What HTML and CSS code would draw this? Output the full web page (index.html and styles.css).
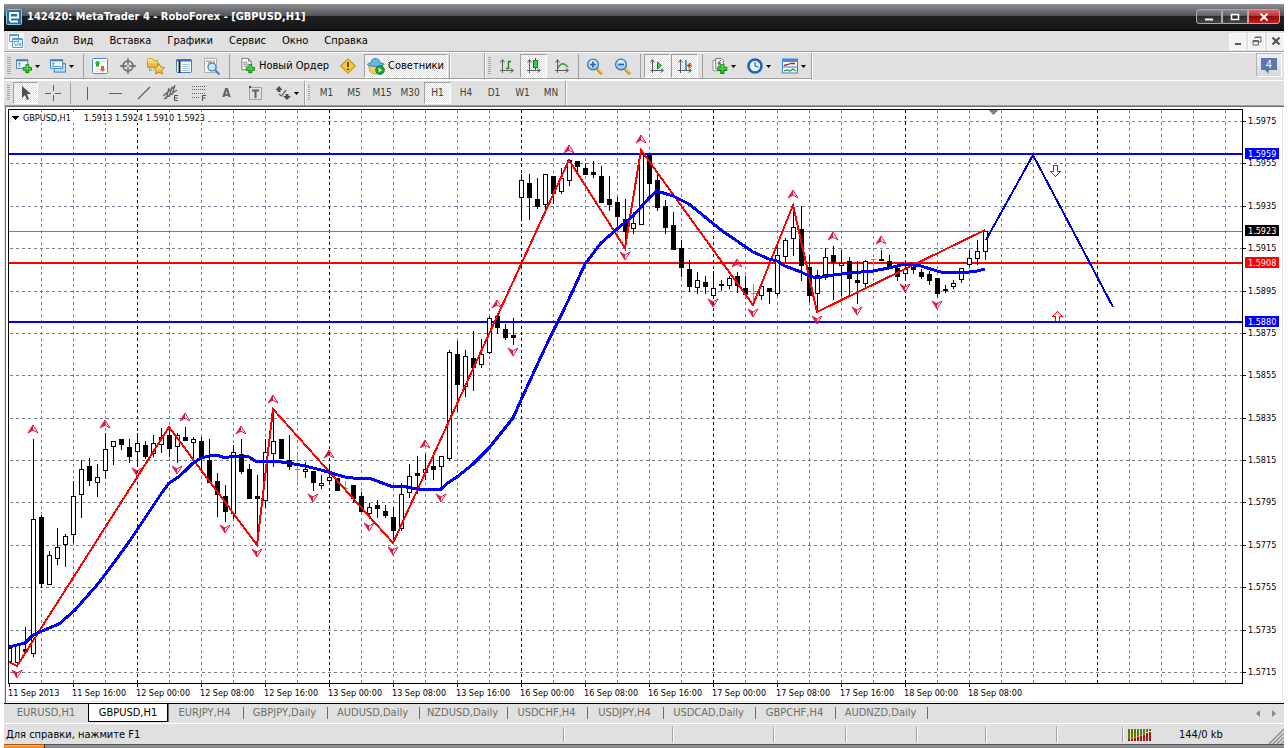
FILE: index.html
```html
<!DOCTYPE html>
<html lang="ru">
<head>
<meta charset="utf-8">
<title>142420: MetaTrader 4 - RoboForex - [GBPUSD,H1]</title>
<link rel="stylesheet" href="styles.css">
</head>
<body>
<svg class="defs" aria-hidden="true">
  <defs>
    <linearGradient id="gold" x1="0" y1="0" x2="0" y2="1"><stop offset="0" stop-color="#fff3a0"/><stop offset="1" stop-color="#e0a820"/></linearGradient>
    <linearGradient id="green" x1="0" y1="0" x2="0" y2="1"><stop offset="0" stop-color="#7cf27c"/><stop offset="1" stop-color="#10b010"/></linearGradient>
    <linearGradient id="sky" x1="0" y1="0" x2="0" y2="1"><stop offset="0" stop-color="#e8f5ff"/><stop offset="1" stop-color="#8cc4ee"/></linearGradient>
    <symbol id="plus" viewBox="0 0 10 10"><path d="M3.500 .5h3v3h3v3h-3v3h-3v-3h-3v-3h3z" fill="url(#green)" stroke="#078a07"/></symbol>
    <symbol id="axes" viewBox="0 0 16 16"><path d="M3.500 15V2M1 12.500h13M1.500 4.500l2-3 2 3M11.500 10.500l3 2-3 2" fill="none" stroke="#5c5c5c"/></symbol>
    <symbol id="caret" viewBox="0 0 5 3"><path d="M0 0h5L2.500 3z" fill="#000"/></symbol>
    <symbol id="cursor-cross" viewBox="0 0 16 16"><path d="M8.500 0v6M8.500 10v6M0 8.500h6M10 8.500h6" stroke="#606060" fill="none"/></symbol>
  </defs>
</svg>

<main class="window">
  <header class="titlebar">
    <svg class="logo" viewBox="0 0 16 16"><rect x=".5" y=".5" width="15" height="15" rx="1" fill="#2b6f9c" stroke="#8dc4e4"/><path d="M4 12V4h8v4.500H4M4 12.500h8" fill="none" stroke="#fff" stroke-width="1.800"/></svg>
    <h1 class="title">142420: MetaTrader 4 - RoboForex - [GBPUSD,H1]</h1>
    <div class="win-buttons">
      <button class="win-btn" aria-label="Свернуть"><svg viewBox="0 0 10 10"><path d="M1 7.500h8" stroke="#fff" stroke-width="2"/></svg></button>
      <button class="win-btn" aria-label="Развернуть"><svg viewBox="0 0 10 10"><path d="M1.500 2.500h7v5h-7z" fill="none" stroke="#fff" stroke-width="1.600"/></svg></button>
      <button class="win-btn close" aria-label="Закрыть"><svg viewBox="0 0 10 10"><path d="M1.500 1.500l7 7M8.500 1.500l-7 7" stroke="#fff" stroke-width="2"/></svg></button>
    </div>
  </header>

  <nav class="menubar">
    <svg class="menu-icon" viewBox="0 0 16 16"><rect width="16" height="16" fill="#fafafa"/><path d="M1.500 1.500h9v7h-9zM4.500 5.500h10v9h-10z" fill="#eef6ff" stroke="#5a9ade"/><path d="M1.500 2.500h9M4.500 6.500h10" stroke="#5a9ade"/><path d="M6 10l2 3 2-3 2 3 1-3" fill="none" stroke="#5a9ade"/></svg>
    <button class="menu-item">Файл</button><button class="menu-item">Вид</button><button class="menu-item">Вставка</button><button class="menu-item">Графики</button><button class="menu-item">Сервис</button><button class="menu-item">Окно</button><button class="menu-item">Справка</button>
    <div class="mdi-buttons">
      <button class="mdi-btn" aria-label="Свернуть окно"><svg viewBox="0 0 10 10"><path d="M2 8h6" stroke="#555" stroke-width="2"/></svg></button>
      <button class="mdi-btn" aria-label="Восстановить окно"><svg viewBox="0 0 10 10"><path d="M1 4.500h5.500v4.500H1zM1 5.500h5.500M3 2.500V1h6v5H7M3 1.500h6" fill="none" stroke="#666"/></svg></button>
      <button class="mdi-btn" aria-label="Закрыть окно"><svg viewBox="0 0 10 10"><path d="M1.500 1.500l7 7M8.500 1.500l-7 7" stroke="#555" stroke-width="2.200"/></svg></button>
    </div>
  </nav>

  <div class="toolrow">
    <div class="toolbar standard">
      <span class="grip"></span>
      <button class="tool drop" aria-label="Новый график"><svg class="ico" viewBox="0 0 17 16"><path d="M.5 1.500h12v9H.5z" fill="#eef6ff" stroke="#3c7fb8"/><path d="M.5 2h12" stroke="#3c7fb8" stroke-width="2"/><path d="M3.500 4v5M2 5.500h3" stroke="#5599cc"/><use href="#plus" x="7" y="6" width="10" height="10"/></svg><svg class="caret"><use href="#caret"/></svg></button>
      <button class="tool drop" aria-label="Профили"><svg class="ico" viewBox="0 0 17 16"><path d="M4.500 5.500h12v9h-12z" fill="#bcdcf4" stroke="#3c7fb8"/><path d="M.5 1.500h13v9H.5z" fill="#eef6ff" stroke="#3c7fb8"/><path d="M.5 2h13" stroke="#3c7fb8" stroke-width="2"/><path d="M3.500 4v5M2 8.500h10M2 5.500h3" stroke="#5599cc"/></svg><svg class="caret"><use href="#caret"/></svg></button>
      <i class="sep"></i>
      <button class="tool" aria-label="Обзор рынка"><svg class="ico" viewBox="0 0 16 16"><rect x=".5" y=".5" width="15" height="15" rx="1" fill="#fff" stroke="#4a90d0"/><path d="M8 3.500h5M3 11.500h4M3 13.500h4" stroke="#ddd"/><path d="M5.500 2.500l3 3H7v3H4v-3H2.500z" fill="#19b519"/><path d="M10.500 14l-3-3H9V8h3v3h1.500z" fill="#f4553a"/></svg></button>
      <button class="tool" aria-label="Окно данных"><svg class="ico" viewBox="0 0 16 16"><circle cx="8" cy="8" r="5" fill="none" stroke="#666" stroke-width="1.500"/><path d="M8 0v7M8 9v7M0 8h7M9 8h7" stroke="#666" stroke-width="1.300"/></svg></button>
      <button class="tool" aria-label="Навигатор"><svg class="ico wide" viewBox="0 0 18 17"><path d="M.5 3.500v-2l1-1h4l1 2h4v7h-10z" fill="url(#gold)" stroke="#c89a28"/><path d="M2 12h5M3 10v4" stroke="#777" stroke-dasharray="1 1"/><path d="M12 5.500l1.700 3.400 3.800.6-2.700 2.700.6 3.800-3.400-1.800L8.600 16l.6-3.800-2.700-2.700 3.800-.6z" fill="url(#gold)" stroke="#c08a18"/></svg></button>
      <button class="tool" aria-label="Терминал"><svg class="ico" viewBox="0 0 16 16"><rect x=".5" y="1.500" width="15" height="13" rx="1" fill="#fff" stroke="#3c7fc0"/><path d="M.5 2.500h15" stroke="#2f6fb8" stroke-width="2"/><path d="M3.500 3v12" stroke="#222" stroke-width="2"/><path d="M6 6.500h8M6 8.500h8M6 10.500h8M6 12.500h8" stroke="#aac8ec"/></svg></button>
      <button class="tool" aria-label="Тестер стратегий"><svg class="ico wide" viewBox="0 0 18 17"><path d="M1.500 .5h12v14h-12z" fill="#f6f6f6" stroke="#b0b0b0"/><path d="M3 3h3v5M8 2v5M11 2v4" stroke="#888" fill="none"/><path d="M12 12l4.500 4.500" stroke="#3c7fc0" stroke-width="2"/><circle cx="9" cy="9" r="4" fill="#c4e2f8" fill-opacity=".85" stroke="#4a90c8" stroke-width="1.400"/></svg></button>
      <i class="sep"></i>
      <button class="tool label new-order"><svg class="ico" viewBox="0 0 16 17"><path d="M1.500 .5h7l3 3v9h-10z" fill="#fff" stroke="#777"/><path d="M8.500 .5v3h3M3 4.500h4M3 6.500h6M3 8.500h5" fill="none" stroke="#777"/><use href="#plus" x="5" y="6.500" width="11" height="10"/></svg>Новый Ордер</button>
      <button class="tool" aria-label="Редактор"><svg class="ico" viewBox="0 0 16 16"><path d="M8 .8L15.200 8 8 15.200.8 8z" fill="#f8cc40" stroke="#c0941c" stroke-width="1.200" stroke-linejoin="round"/><path d="M8 4v5M8 10.500v1.700" stroke="#4a3a10" stroke-width="1.700"/></svg></button>
      <button class="tool label pressed experts"><svg class="ico wide" viewBox="0 0 18 17"><path d="M2 7c0 6 2 9 7 9s6-4 6-9z" fill="#f4d050" stroke="#c8a020"/><path d="M4 5c0-3 2-4.500 4-4.500S13 1.500 13 5c3 0 4 .5 4 1.500S12 8.500 8.500 8.500.5 7.500.5 6.500 2 5 4 5z" fill="#68b4e4" stroke="#3c86b8"/><circle cx="13" cy="12" r="4.300" fill="#18a830" stroke="#0c8420"/><path d="M11.700 9.800v4.400l3.500-2.200z" fill="#fff"/></svg>Советники</button>
      <span class="spacer"></span>
    </div>
    <div class="toolbar charts">
      <span class="grip"></span>
      <button class="tool" aria-label="Бары"><svg class="ico" viewBox="0 0 16 16"><use href="#axes"/><path d="M7 10.500h2.500M9.500 3V11M9.500 3.500h2.500" stroke="#128a12" fill="none" stroke-width="1.400"/></svg></button>
      <button class="tool pressed" aria-label="Свечи"><svg class="ico" viewBox="0 0 16 16"><use href="#axes"/><path d="M9.500 0v12" stroke="#128a12"/><rect x="7.500" y="2.500" width="4" height="7" fill="#30d040" stroke="#128a12"/></svg></button>
      <button class="tool" aria-label="Линия"><svg class="ico" viewBox="0 0 16 16"><use href="#axes"/><path d="M4 10c3-6 6-5 10-1" stroke="#2c9a3c" fill="none" stroke-width="1.300"/></svg></button>
      <i class="sep"></i>
      <button class="tool" aria-label="Увеличить"><svg class="ico wide" viewBox="0 0 18 17"><path d="M11 11l5 5" stroke="#c89820" stroke-width="3"/><path d="M11 10l5 5" stroke="#f8dc60"/><circle cx="7" cy="6.500" r="5.400" fill="url(#sky)" stroke="#3478b8" stroke-width="1.300"/><path d="M7 3.500v6M4 6.500h6" stroke="#2868a8" stroke-width="1.700"/></svg></button>
      <button class="tool" aria-label="Уменьшить"><svg class="ico wide" viewBox="0 0 18 17"><path d="M11 11l5 5" stroke="#c89820" stroke-width="3"/><path d="M11 10l5 5" stroke="#f8dc60"/><circle cx="7" cy="6.500" r="5.400" fill="url(#sky)" stroke="#3478b8" stroke-width="1.300"/><path d="M4 6.500h6" stroke="#2868a8" stroke-width="1.700"/></svg></button>
      <i class="sep"></i>
      <button class="tool pressed" aria-label="Автопрокрутка"><svg class="ico" viewBox="0 0 16 16"><use href="#axes"/><path d="M8.500 4v7l4-3.500z" fill="#40d850" stroke="#128a12"/></svg></button>
      <button class="tool pressed" aria-label="Сдвиг графика"><svg class="ico" viewBox="0 0 16 16"><use href="#axes"/><path d="M9 2v10" stroke="#1c6ca0" stroke-width="1.400"/><path d="M15 7.500h-4M13.500 5L11 7.500l2.500 2.500" fill="none" stroke="#c04010" stroke-width="1.400"/></svg></button>
      <i class="sep"></i>
      <button class="tool drop" aria-label="Индикаторы"><svg class="ico" viewBox="0 0 16 17"><path d="M.5 2.500h9v11h-9z" fill="#fff" stroke="#888"/><path d="M3.500 .5h6l2 2v9h-8z" fill="#fff" stroke="#666"/><path d="M9 3c-2-1-2 1-2 3v4M5.500 5.500H9" fill="none" stroke="#333"/><use href="#plus" x="5" y="6" width="11" height="11"/></svg><svg class="caret"><use href="#caret"/></svg></button>
      <button class="tool drop" aria-label="Периоды"><svg class="ico" viewBox="0 0 16 16"><circle cx="8" cy="8" r="6.500" fill="#e8f4ff" stroke="#1c66b8" stroke-width="2.600"/><path d="M8 4v4l3.500 1" fill="none" stroke="#345"/></svg><svg class="caret"><use href="#caret"/></svg></button>
      <button class="tool drop" aria-label="Шаблоны"><svg class="ico" viewBox="0 0 16 15"><rect x=".5" y=".5" width="15" height="14" fill="#f4faff" stroke="#3c7fc0"/><path d="M0 2h16" stroke="#4a8cd0" stroke-width="3"/><path d="M.5 8.500h15" stroke="#3c7fc0"/><path d="M2 7l4-1 3-1h4" fill="none" stroke="#a02820" stroke-width="1.300"/><path d="M2 12.500l3-1 3 1 3-2 3 2" fill="none" stroke="#2c9a2c" stroke-width="1.300"/></svg><svg class="caret"><use href="#caret"/></svg></button>
    </div>
    <button class="news" aria-label="Сообщения: 4"><svg viewBox="0 0 18 17"><path d="M1 1h16v12H9l-1 3.500L5 13H1z" fill="#5878b0"/><text class="news-count" x="9" y="11" text-anchor="middle">4</text></svg></button>
  </div>

  <div class="toolrow second">
    <div class="toolbar line">
      <span class="grip"></span>
      <button class="tool pressed" aria-label="Курсор"><svg class="ico" viewBox="0 0 16 16"><path d="M4 1v12l3-3 2 5 2-1-2-5h4z" fill="#505050"/></svg></button>
      <button class="tool" aria-label="Перекрестие"><svg class="ico"><use href="#cursor-cross"/></svg></button>
      <i class="sep"></i>
      <button class="tool" aria-label="Вертикальная линия"><svg class="ico" viewBox="0 0 16 16"><path d="M8.500 2v13" stroke="#606060"/></svg></button>
      <button class="tool" aria-label="Горизонтальная линия"><svg class="ico" viewBox="0 0 16 16"><path d="M2 8.500h13" stroke="#606060"/></svg></button>
      <button class="tool" aria-label="Трендовая линия"><svg class="ico" viewBox="0 0 16 16"><path d="M2 14L14 2" stroke="#606060" stroke-width="1.300"/></svg></button>
      <button class="tool" aria-label="Канал"><svg class="ico" viewBox="0 0 16 16"><path d="M0 11L12 1M1 14l13-9M3 14l3-11M6 12l3-10M9 10l3-10" stroke="#606060" fill="none" stroke-width="1.200"/><path d="M15 10.500h-3.500v5H15M12 13h2.500" fill="none" stroke="#505050"/></svg></button>
      <button class="tool" aria-label="Фибоначчи"><svg class="ico" viewBox="0 0 16 16"><path d="M1 1.500h13M1 4.500h13M1 8.500h13M1 12.500h8" stroke="#606060" stroke-dasharray="1 1"/><path d="M15 10.500h-3.500V16M12 13h2.500" fill="none" stroke="#505050"/></svg></button>
      <button class="tool glyph">A</button>
      <button class="tool" aria-label="Метка"><svg class="ico" viewBox="0 0 16 16"><path d="M2.500 2.500h12v12h-12z" fill="none" stroke="#606060" stroke-dasharray="1 1"/><path d="M2 2h2" stroke="#444" stroke-width="2"/><path d="M5 5.500h7M8.500 5v8" stroke="#606060" stroke-width="2"/></svg></button>
      <button class="tool drop" aria-label="Стрелки"><svg class="ico" viewBox="0 0 16 16"><path d="M4 1l3.500 4H5.500v2h-3V5H.5z" fill="#505050"/><path d="M4 9l2.500 2L11 5" fill="none" stroke="#505050" stroke-width="1.200"/><path d="M12 15l-4-4h2.500V9h3v2H16z" fill="#505050"/></svg><svg class="caret"><use href="#caret"/></svg></button>
    </div>
    <div class="toolbar periods">
      <span class="grip"></span>
      <button class="tool period">M1</button><button class="tool period">M5</button><button class="tool period">M15</button><button class="tool period">M30</button><button class="tool period pressed">H1</button><button class="tool period">H4</button><button class="tool period">D1</button><button class="tool period">W1</button><button class="tool period">MN</button>
    </div>
  </div>

  <section class="chart-panel" aria-label="GBPUSD,H1">
    <svg class="chart" id="chart" viewBox="6 107 1276 594"></svg>
  </section>

  <div class="tabs">
    <button class="tab">EURUSD,H1</button><button class="tab active">GBPUSD,H1</button><button class="tab">EURJPY,H4</button><button class="tab">GBPJPY,Daily</button><button class="tab">AUDUSD,Daily</button><button class="tab">NZDUSD,Daily</button><button class="tab">USDCHF,H4</button><button class="tab">USDJPY,H4</button><button class="tab">USDCAD,Daily</button><button class="tab">GBPCHF,H4</button><button class="tab">AUDNZD,Daily</button>
    <div class="tab-scroll">
      <button class="scroll-btn" aria-label="Назад"><svg viewBox="0 0 4 7"><path d="M4 0v7L0 3.500z" fill="#888"/></svg></button>
      <button class="scroll-btn" aria-label="Вперёд"><svg viewBox="0 0 4 7"><path d="M0 0v7l4-3.500z" fill="#888"/></svg></button>
    </div>
  </div>

  <footer class="status">
    <span class="cell help">Для справки, нажмите F1</span>
    <span class="cell"></span><span class="cell"></span><span class="cell"></span><span class="cell"></span><span class="cell"></span><span class="cell"></span>
    <span class="cell"></span>
    <span class="cell traffic"><svg class="bars" viewBox="0 0 24 12"><path d="M1 0v10M4 0v9M7 0v8M10 0v7M13 0v6M16 0v5M19 0v3M22 0v2" stroke="#5c7c08" stroke-width="2"/><path d="M1 10v2M4 9.500V12M7 8.500V12M10 7.500V12M13 6.500V12M16 5.500V12M19 4v8M22 3v9" stroke="#a01808" stroke-width="2"/></svg>144/0 kb</span>
    <svg class="resize" viewBox="0 0 16 16"><path d="M1 16L16 1M5 16L16 5M9 16l7-7M13 16l3-3" stroke="#909090" stroke-width="1.500"/></svg>
  </footer>
</main>
<div class="taskbar"><span class="start"></span></div>
<script src="chart.js"></script>
</body>
</html>
```
FILE: styles.css
```css
* { box-sizing: border-box; }
html, body { height: 100%; }
body {
  margin: 0;
  padding: 4px 4px 0;
  display: flex;
  flex-direction: column;
  background: #fff;
  color: #000;
  font: 11px/14px "DejaVu Sans Condensed", "DejaVu Sans", sans-serif;
  overflow: hidden;
}
button { font: inherit; color: inherit; border: 0; padding: 0; margin: 0; background: none; white-space: nowrap; }
svg { display: block; flex: none; }
.defs { position: absolute; width: 0; height: 0; }

.window { flex: 1; min-height: 0; display: flex; flex-direction: column; background: #e0e0e0; }

.titlebar {
  flex: none;
  height: 27px;
  display: flex;
  align-items: center;
  padding: 0 4px 1px 2px;
  background: linear-gradient(#8c8e91 0, #505254 12px, #1e1f20 12px, #161718 25px, #000 26px);
}
.logo { width: 16px; height: 16px; }
.title { flex: 1; margin: 0 0 0 5px; color: #fff; font-size: 11px; line-height: 14px; font-weight: bold; }
.win-buttons { display: flex; gap: 0; align-self: flex-start; padding-top: 5px; }
.win-btn {
  width: 26px; height: 15px;
  display: grid; place-items: center;
  border: 1px solid #aaa;
  background: linear-gradient(#88898c, #5a5b5e 50%, #2c2d2f 50%, #444);
}
.win-btn:first-child { border-radius: 3px 0 0 3px; }
.win-btn.close { width: 32px; border-radius: 0 3px 3px 0; border-color: #d8a0a0; background: linear-gradient(#d46a6a, #b83030 50%, #980808 50%, #c02020); }
.win-btn svg { width: 10px; height: 10px; }

.menubar { flex: none; height: 21px; display: flex; align-items: center; padding-left: 4px; border-bottom: 1px solid #a0a0a0; }
.menu-icon { width: 16px; height: 16px; }
.menu-item { padding: 0 8px; }
.menu-item:first-of-type { padding: 0 7px; }
.mdi-buttons { margin-left: auto; display: flex; gap: 2px; }
.mdi-btn { width: 17px; height: 17px; display: grid; place-items: center; background: #f2f2f2; border: 1px solid #fafafa; }
.mdi-btn svg { width: 10px; height: 10px; }

.toolrow { flex: none; display: flex; height: 28px; border-top: 1px solid #fff; align-items: stretch; }
.toolrow.second { height: 25px; }
.toolbar { display: grid; padding: 1px 0; border-right: 1px solid #a0a0a0; }
.toolrow:not(.second) .toolbar { border-bottom: 1px solid #fff; box-shadow: inset 0 -1px #a0a0a0, 1px 0 #fff; }
.toolrow.second .toolbar { box-shadow: 1px 0 #fff; }
.standard { grid-template-columns: 10px 28px 39px 5px 28px 28px 28px 28px 28px 7px 101px 27px 88px 35px; }
.charts { grid-template-columns: 9px 26px 28px 28px 5px 28px 28px 7px 27px 28px 7px 35px 35px 35px; }
.line { grid-template-columns: 9px 26px 28px 6px 27px 30px 27px 28px 27px 29px 28px 35px; }
.periods { grid-template-columns: 8px 27px 28px 28px 28px 28px 28px 28px 29px 28px; }
.grip { margin: 3px 3px; background: repeating-linear-gradient(#a0a0a0 0 1px, #e8e8e8 1px 2px); }
.sep { width: 1px; justify-self: center; background: #a0a0a0; }
.tool { display: flex; align-items: center; justify-content: center; gap: 3px; }
.ico { width: 16px; height: 16px; }
.ico.wide { width: 18px; height: 17px; }
.caret { width: 5px; height: 3px; }
.tool.label { justify-content: flex-start; padding-left: 7px; }
.tool.experts { padding-left: 2px; margin-left: 3px; }
.spacer { border-left: 1px solid #a0a0a0; box-shadow: inset 1px 0 #fff; }
.tool.pressed {
  margin-right: 1px;
  border: 1px solid;
  border-color: #a0a0a0 #fff #fff #a0a0a0;
  background: repeating-conic-gradient(#fff 0 25%, #e0e0e0 0 50%) 0 0 / 2px 2px;
}
.period { font-size: 10px; line-height: 12px; color: #404040; }
.glyph { font-size: 12px; line-height: 14px; font-weight: bold; color: #606060; }
.news { margin: 0 2px 3px auto; width: 26px; display: grid; place-items: center; background: linear-gradient(#f0f0f0, #d8d8d8); border: 1px solid #b4b4b4; border-right-color: #fff; border-bottom-color: #fff; }
.news svg { width: 18px; height: 17px; }
.news-count { font-size: 11px; fill: #fff; }

.chart-panel {
  flex: 1;
  min-height: 0;
  display: flex;
  background: #fff;
  border-top: 1px solid #a0a0a0;
  border-left: 1px solid #e0e0e0;
  box-shadow: inset 1px 1px #6d6f64;
  padding: 1px 1px 1px 1px;
}
.chart { flex: 1; min-width: 0; height: 100%; border-right: 1px solid #e8e8e8; border-bottom: 1px solid #e8e8e8; font-size: 9px; }
.grid-line { stroke: #708090; stroke-dasharray: 3 3; }
.day-line { stroke: #000; stroke-dasharray: 3 3; }
.frame { fill: none; stroke: #000; }
.wick { stroke: #000; }
.bull { fill: #fff; stroke: #000; }
.bear { fill: #000; stroke: #000; }
.doji { fill: none; stroke: #00ff00; }
.zigzag { fill: none; stroke: #f00; stroke-width: 2; }
.average { fill: none; stroke: #00f; stroke-width: 3; }
.forecast { fill: none; stroke: #0000cd; stroke-width: 2; }
.fractal { fill: none; stroke: #dc143c; }
.fractal-half { fill: #dc143c; }
.signal { fill: #fff; stroke: #f00; }
.level { stroke-width: 2; }
.tag-text { fill: #fff; }

.tabs {
  flex: none;
  height: 21px;
  display: grid;
  grid-template-columns: 84px 80px 76px 84px 92px 88px 80px 76px 92px 80px 92px 1fr;
  border-top: 1px solid #000;
  border-bottom: 1px solid #fff;
  color: #6d6f64;
}
.tab { font-size: 11px; line-height: 14px; height: 17px; padding-right: 3px; background: linear-gradient(#6d6f64, #6d6f64) right 3px / 1px 12px no-repeat; }
.tab:first-child { padding-right: 0; background: none; }
.tab.active { height: 18px; padding-right: 0; color: #000; background: #fff; border: 1px solid #000; border-top: 0; box-shadow: 1px 0 #6d6f64; }
.tab-scroll { display: flex; justify-content: flex-end; gap: 12px; padding-right: 8px; }
.scroll-btn { display: flex; align-items: center; }
.scroll-btn svg { width: 4px; height: 7px; }

.status {
  flex: none;
  height: 20px;
  display: grid;
  grid-template-columns: 560px 109px 101px 72px 71px 69px 71px 66px 1fr 16px;
}
.cell { display: flex; align-items: center; margin: 3px 0 2px; border-right: 1px solid #a0a0a0; box-shadow: 1px 0 #fff; }
.cell.help { padding-left: 2px; }
.cell.traffic { border: 0; box-shadow: none; padding-left: 5px; gap: 27px; }
.bars { width: 24px; height: 12px; }
.resize { width: 16px; height: 16px; align-self: end; }

.taskbar { flex: none; height: 4px; background: linear-gradient(#505254 1px, #96989c 1px, #808286); }
.start { display: block; width: 41px; height: 4px; background: linear-gradient(#a85810 1px, #ffb050 1px, #f08020); border-right: 1px solid #333; }
```
FILE: chart.js
```javascript
const NS = 'http://www.w3.org/2000/svg';
const chart = document.getElementById('chart');

function add(tag, attrs, text) {
  const node = document.createElementNS(NS, tag);
  for (const key in attrs) node.setAttribute(key, attrs[key]);
  if (text) node.textContent = text;
  chart.appendChild(node);
  return node;
}
function path(d, cls) {
  return add('path', { d, class: cls, 'shape-rendering': 'crispEdges' });
}
function poly(points, cls) {
  path('M' + points.map(p => p.join(' ')).join('L'), cls);
}

const left = 8, right = 1242, top_ = 109, bottom = 683;

// Grid
const rows = [121, 163, 206, 248, 291, 333, 375, 418, 460, 502, 545, 587, 630, 672];
rows.forEach(y => path(`M10 ${y + .5}H${right}`, 'grid-line'));
for (let x = 41; x < right; x += 32) {
  path(`M${x + .5} 110V${bottom}`, (x - 137) % 192 === 0 ? 'day-line' : 'grid-line');
}

// Horizontal levels
[[154, '#00f'], [322, '#00f'], [263, '#f00']].forEach(([y, color]) => {
  path(`M9 ${y}H${right}`, 'level').setAttribute('stroke', color);
});
path(`M9 231.5H${right}`, '').setAttribute('stroke', '#708090');

// Hourly bars: high, low, body top, body bottom, kind (w rising, b falling, d unchanged)
const bars = `648 662 648 662 w|645 665 645 663 w|627 652 649 652 b|439 657 519 654 w|515 588 517 584 b|551 585 555 585 w
528 565 547 559 w|534 567 536 545 w|481 543 496 535 w|460 518 469 495 w|458 486 466 481 b|464 497 477 483 w
433 479 449 471 w|441 465 441 447 w|439 450 439 445 b|439 463 447 457 b|433 465 443 452 w|441 459 445 457 b
435 457 443 454 w|428 453 437 445 w|428 457 435 449 b|433 463 435 447 w|427 441 437 441 b|437 458 439 443 w
437 473 441 457 b|439 483 460 483 b|473 517 481 495 b|485 522 496 512 b|445 519 452 514 w|439 474 454 472 b
464 499 469 499 b|475 543 496 499 b|439 508 452 501 w|410 467 441 454 w|439 459 439 459 b|435 470 460 467 b
453 481 469 469 d|462 478 469 472 w|471 491 471 483 b|475 489 483 486 w|464 485 477 481 w|478 491 478 491 b
481 493 488 488 d|485 503 485 499 b|492 512 496 512 b|503 519 507 514 w|500 518 505 509 b|505 518 511 516 b
507 543 517 531 b|483 531 494 529 w|464 498 476 493 w|456 494 473 476 b|454 480 469 473 w|457 480 466 470 b
456 489 456 467 w|350 461 352 459 w|341 412 354 385 b|350 397 356 387 w|331 391 358 368 b|339 368 354 365 w
316 354 318 353 w|316 334 316 328 b|324 340 329 338 b|318 345 335 338 b|174 220 180 198 w|174 220 183 198 b
178 209 199 207 b|174 212 174 205 w|176 204 176 194 b|168 194 178 192 w|160 186 160 181 w|161 175 161 167 b
163 175 168 175 b|161 178 172 175 b|166 203 176 203 b|176 211 199 205 b|197 226 202 217 b|199 248 219 232 b
212 234 223 229 w|150 225 154 225 w|155 196 155 184 b|174 211 180 208 b|200 234 206 228 b|212 250 225 250 b
240 277 248 268 b|260 292 269 287 b|272 294 280 288 w|276 294 282 287 b|271 298 288 296 w|280 291 284 286 w
276 289 278 286 w|272 293 276 286 b|276 295 288 295 b|284 303 293 293 d|286 300 286 296 w|288 304 288 292 b
246 296 255 294 w|238 262 240 257 w|210 256 227 239 w|206 281 229 266 b|255 302 267 296 b|270 311 275 294 w
248 280 257 275 w|246 300 255 262 b|250 296 263 266 w|257 296 261 279 b|261 304 280 283 b|260 287 261 284 w
259 269 259 259 d|250 261 259 261 w|255 269 261 268 b|265 281 268 277 b|264 281 269 274 w|265 274 267 270 b
269 279 272 277 b|271 285 274 281 b|278 297 278 294 b|285 293 289 291 w|280 289 283 287 w|268 283 268 280 w
250 267 258 265 w|240 265 251 259 w|231 260 231 252 w`.split(/[|\n]/);

bars.forEach((row, i) => {
  const [high, low, open, close, kind] = row.split(' ');
  const x = 9 + i * 8, hi = +high, lo = +low, a = +open, b = +close;
  if (kind === 'd') {
    path(`M${x + .5} ${hi}V${lo}M${x - 2} ${a + .5}h5`, 'doji');
    return;
  }
  path(`M${x + .5} ${hi}V${lo}`, 'wick');
  const edge = Math.max(x - 1.5, 8.5);
  path(`M${edge} ${a + .5}H${x + 2.5}V${Math.max(b - .5, a + 1.5)}H${edge}Z`, kind === 'w' ? 'bull' : 'bear');
});

poly([[9, 662], [17, 666], [169, 427], [257, 545], [273, 409], [393, 543], [569, 160], [625, 248], [641, 150],
  [753, 305], [793, 205], [817, 312], [985, 230]], 'zigzag');
poly([[9, 647], [25, 643], [33, 635], [49, 628], [59, 624], [75, 610], [97, 585], [113, 564], [129, 542], [145, 518],
  [161, 494], [169, 483], [177, 478], [185, 471], [193, 463], [201, 458], [209, 456], [217, 455], [225, 458], [233, 456],
  [249, 457], [257, 462], [273, 461], [289, 463], [305, 466], [321, 470], [345, 477], [361, 479], [369, 478], [377, 481],
  [393, 487], [401, 486], [417, 489], [441, 489], [449, 482], [457, 477], [473, 464], [489, 448], [513, 418], [521, 400],
  [545, 348], [569, 299], [585, 264], [601, 243], [617, 229], [633, 216], [649, 198], [657, 191], [673, 196], [689, 204],
  [705, 217], [721, 230], [737, 241], [753, 252], [769, 259], [777, 261], [785, 266], [801, 272], [809, 276], [817, 278],
  [833, 275], [849, 273], [873, 271], [889, 268], [905, 264], [921, 266], [937, 271], [945, 273], [969, 272], [977, 271],
  [985, 269]], 'average');
poly([[986, 240], [1033, 155], [1113, 307]], 'forecast');

// Fractal marks
function fractal(x, y, dir) {
  const k = dir;
  add('path', { class: 'fractal', d: `M${x} ${y - 4 * k}L${x + 5} ${y + 4 * k}L${x} ${y + k}L${x - 5} ${y + 4 * k}Z` });
  add('path', { class: 'fractal-half', d: `M${x} ${y - 4 * k}V${y + k}L${x - 4} ${y + 3 * k}Z` });
}
[[33, 429], [105, 424], [185, 417], [241, 430], [273, 399], [329, 454], [425, 444], [497, 304], [569, 149], [641, 139],
  [737, 263], [793, 194], [833, 236], [881, 240]].forEach(p => fractal(p[0], p[1], 1));
[[17, 674], [137, 472], [177, 470], [225, 529], [257, 553], [313, 498], [369, 527], [393, 551], [441, 498], [513, 352],
  [625, 256], [713, 303], [753, 313], [817, 320], [857, 311], [905, 288], [937, 305]].forEach(p => fractal(p[0], p[1], -1));

path('M1053.5 165.5h4v6h3l-5 5-5-5h3z', 'signal');
path('M1055.5 320.5v-4h-3l5-5 5 5h-3v4', 'signal');

// Frame, heading and axes
path(`M${left + .5} ${top_ + .5}H${right + .5}V${bottom + .5}H${left + .5}Z`, 'frame');
path('M988 110h10l-5 5z', '').setAttribute('fill', '#708090');
add('rect', { x: 11, y: 112, width: 194, height: 11, fill: '#fff' });
path('M12 116h7l-3.500 4z', '');
add('text', { x: 23, y: 121 }, 'GBPUSD,H1');
add('text', { x: 84, y: 121 }, '1.5913 1.5924 1.5910 1.5923');

rows.forEach((y, i) => {
  path(`M1243 ${y + .5}h3`, 'wick');
  add('text', { x: 1248, y: y + 3 }, ((15975 - i * 20) / 10000).toFixed(4));
});
[[154, '1.5959', '#00f'], [231, '1.5923', '#000'], [263, '1.5908', '#f00'], [322, '1.5880', '#00f']].forEach(([y, label, fill]) => {
  add('rect', { x: 1245, y: y - 6, width: 34, height: 11, fill });
  add('text', { x: 1248, y: y + 3, class: 'tag-text' }, label);
});
['11 Sep 2013', '11 Sep 16:00', '12 Sep 00:00', '12 Sep 08:00', '12 Sep 16:00', '13 Sep 00:00', '13 Sep 08:00',
  '13 Sep 16:00', '16 Sep 00:00', '16 Sep 08:00', '16 Sep 16:00', '17 Sep 00:00', '17 Sep 08:00', '17 Sep 16:00',
  '18 Sep 00:00', '18 Sep 08:00'].forEach((label, i) => {
  path(`M${9.5 + i * 64} 684v3`, 'wick');
  add('text', { x: 8 + i * 64, y: 696 }, label);
});
```
